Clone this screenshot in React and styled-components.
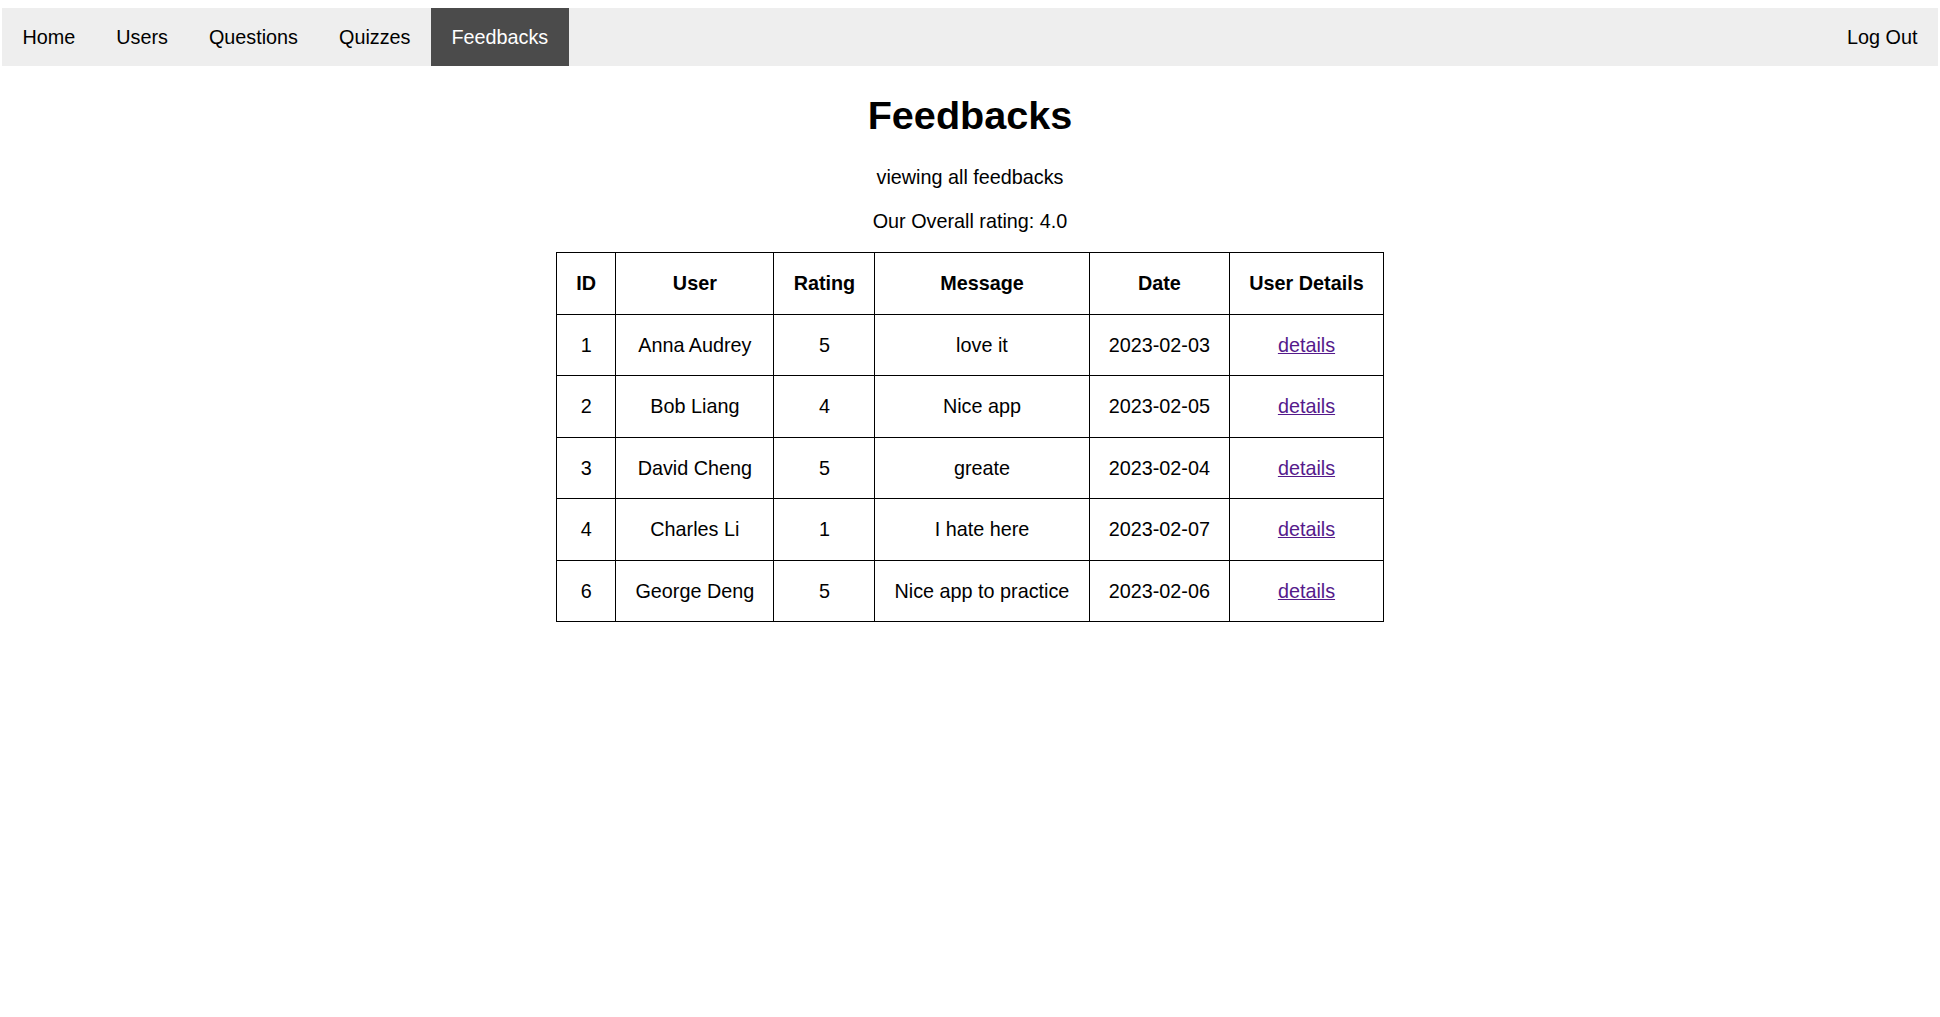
import styled, { createGlobalStyle } from 'styled-components';

const GlobalStyle = createGlobalStyle`
  body {
    margin: 8px 2px 0;
    font-family: "Liberation Sans", Arial, Helvetica, sans-serif;
    color: #000;
    background: #fff;
  }
`;

const StyledNav = styled.nav`
  display: flex;
  justify-content: space-between;
  align-items: stretch;
  background-color: #eeeeee;
`;

const StyledNavGroup = styled.div`
  display: flex;
`;

const StyledNavLink = styled.a`
  display: block;
  padding: 17.5px 20.5px;
  font-size: 19.8px;
  line-height: 23px;
  text-decoration: none;
  color: ${({ $active }) => ($active ? '#ffffff' : '#000000')};
  background-color: ${({ $active }) => ($active ? '#4b4b4b' : 'transparent')};
  cursor: pointer;
`;

const StyledMain = styled.main`
  display: flex;
  flex-direction: column;
  align-items: center;
`;

const StyledTitle = styled.h1`
  font-size: 39.6px;
  line-height: 45.5px;
  margin: 26.5px 0 27.5px;
  font-weight: bold;
`;

const StyledText = styled.p`
  font-size: 19.8px;
  line-height: 23px;
  margin: 0 0 ${({ $gap }) => $gap}px;
`;

const StyledTable = styled.table`
  border-collapse: collapse;
  font-size: 19.8px;
  line-height: 22.5px;
`;

const StyledHeadCell = styled.th`
  border: 1px solid #000;
  padding: 19px 19.2px;
  font-weight: bold;
  text-align: center;
`;

const StyledCell = styled.td`
  border: 1px solid #000;
  padding: 19px 19.2px;
  text-align: center;
`;

const StyledDetailsLink = styled.a`
  color: #551a8b;
  text-decoration: underline;
  cursor: pointer;
`;

const navItems = ['Home', 'Users', 'Questions', 'Quizzes', 'Feedbacks'];

const feedbacks = [
  { id: 1, user: 'Anna Audrey', rating: 5, message: 'love it', date: '2023-02-03' },
  { id: 2, user: 'Bob Liang', rating: 4, message: 'Nice app', date: '2023-02-05' },
  { id: 3, user: 'David Cheng', rating: 5, message: 'greate', date: '2023-02-04' },
  { id: 4, user: 'Charles Li', rating: 1, message: 'I hate here', date: '2023-02-07' },
  { id: 6, user: 'George Deng', rating: 5, message: 'Nice app to practice', date: '2023-02-06' },
];

export default function App() {
  return (
    <>
      <GlobalStyle />
      <StyledNav>
        <StyledNavGroup>
          {navItems.map((item) => (
            <StyledNavLink key={item} $active={item === 'Feedbacks'}>
              {item}
            </StyledNavLink>
          ))}
        </StyledNavGroup>
        <StyledNavLink>Log Out</StyledNavLink>
      </StyledNav>
      <StyledMain>
        <StyledTitle>Feedbacks</StyledTitle>
        <StyledText $gap={21.8}>viewing all feedbacks</StyledText>
        <StyledText $gap={18.8}>Our Overall rating: 4.0</StyledText>
        <StyledTable>
          <thead>
            <tr>
              <StyledHeadCell>ID</StyledHeadCell>
              <StyledHeadCell>User</StyledHeadCell>
              <StyledHeadCell>Rating</StyledHeadCell>
              <StyledHeadCell>Message</StyledHeadCell>
              <StyledHeadCell>Date</StyledHeadCell>
              <StyledHeadCell>User Details</StyledHeadCell>
            </tr>
          </thead>
          <tbody>
            {feedbacks.map((fb) => (
              <tr key={fb.id}>
                <StyledCell>{fb.id}</StyledCell>
                <StyledCell>{fb.user}</StyledCell>
                <StyledCell>{fb.rating}</StyledCell>
                <StyledCell>{fb.message}</StyledCell>
                <StyledCell>{fb.date}</StyledCell>
                <StyledCell>
                  <StyledDetailsLink>details</StyledDetailsLink>
                </StyledCell>
              </tr>
            ))}
          </tbody>
        </StyledTable>
      </StyledMain>
    </>
  );
}
